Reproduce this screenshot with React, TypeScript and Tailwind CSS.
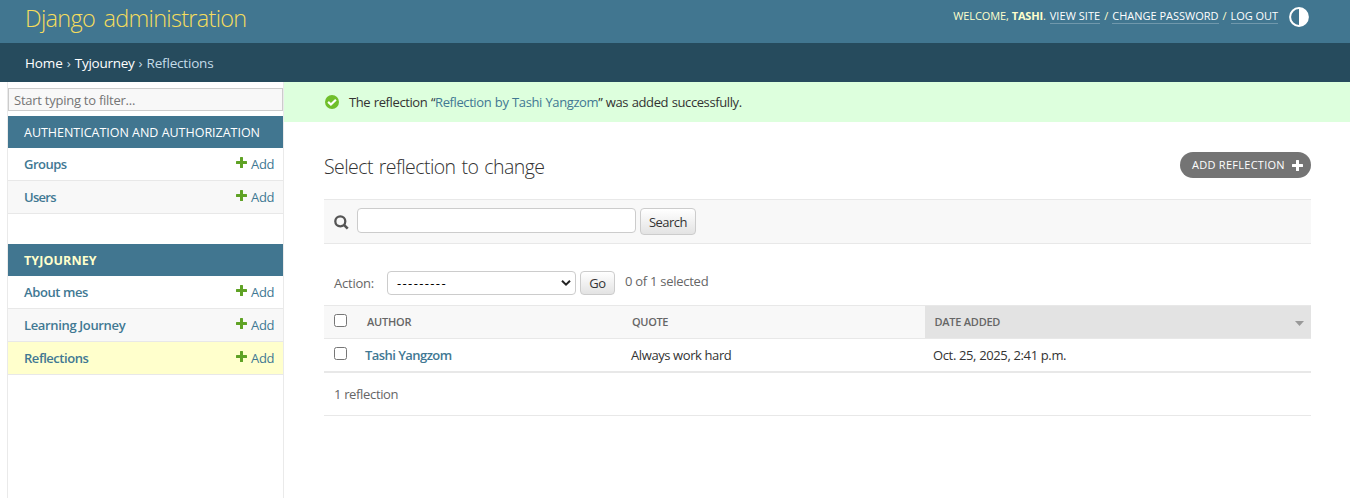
import React from "react";

type Model = { name: string; nameClass: string; rowClass: string };

const auth: Model[] = [
  { name: "Groups", nameClass: "tracking-[-0.5px]", rowClass: "bg-white" },
  { name: "Users", nameClass: "tracking-[-0.7px]", rowClass: "bg-[#f8f8f8]" },
];

const journey: Model[] = [
  { name: "About mes", nameClass: "tracking-[-0.4px]", rowClass: "bg-white" },
  { name: "Learning Journey", nameClass: "tracking-[-0.35px]", rowClass: "bg-[#f8f8f8]" },
  { name: "Reflections", nameClass: "tracking-[-0.45px]", rowClass: "bg-[#ffffcc]" },
];

function Plus({ className }: { className: string }) {
  return (
    <svg viewBox="0 0 11 11" className={className} fill="currentColor">
      <path d="M4 .6Q4 0 4.6 0H6.4Q7 0 7 .6V4H10.4Q11 4 11 4.6V6.4Q11 7 10.4 7H7V10.4Q7 11 6.4 11H4.6Q4 11 4 10.4V7H.6Q0 7 0 6.4V4.6Q0 4 .6 4H4Z" />
    </svg>
  );
}

function ModelRows({ items }: { items: Model[] }) {
  return (
    <ul>
      {items.map((m) => (
        <li
          key={m.name}
          className={`flex h-[33px] items-center border-b border-[#e8e8e8] pl-4 pr-2 text-[13px] leading-8 text-[#417893] ${m.rowClass}`}
        >
          <a className={`flex-1 font-semibold ${m.nameClass}`}>{m.name}</a>
          <a className="flex">
            <Plus className="mr-1 mt-[9px] size-[11px] text-[#5fa225]" />
            <span className="w-6 tracking-[-0.3px]">Add</span>
          </a>
        </li>
      ))}
    </ul>
  );
}

const toolLink = "mx-1 inline-block h-[17px] border-b border-white/25 leading-[18px] text-white";
const button =
  "rounded-[4px] border border-[#ccc] bg-linear-to-b from-white to-[#e3e3e3] text-center text-[#333]";
const checkbox =
  "block size-[13px] appearance-none rounded-[2.5px] border border-[#767676] bg-white";

export default function App() {
  return (
    <div className="flex h-[498px] flex-col overflow-hidden bg-white font-['Open_Sans','Noto_Sans',sans-serif] text-[13px] text-[#333]">
      <header className="flex h-[43px] shrink-0 items-start justify-between bg-[#417690] pl-[25px] pr-[41px]">
        <h1 className="text-[23.5px] font-light leading-9 tracking-[-0.7px] text-[#f5dd5d] [word-spacing:3px]">
          Django administration
        </h1>
        <div className="flex pt-[7px]">
          <div className="flex text-[11px] leading-[18px] text-[#ffffcc]">
            <span className="tracking-[-0.1px]">WELCOME,</span>
            <strong className="ml-[3px] font-bold tracking-[-0.2px]">TASHI</strong>
            <span>.</span>
            <a className={`${toolLink} tracking-[0.05px]`}>VIEW SITE</a>/
            <a className={`${toolLink} tracking-[-0.01px]`}>CHANGE PASSWORD</a>/
            <a className={`${toolLink} mr-0 tracking-[-0.05px]`}>LOG OUT</a>
          </div>
          <svg viewBox="0 0 20 20" className="ml-[11px] size-5">
            <circle cx="10" cy="10" r="8.9" fill="none" stroke="#fff" strokeWidth="2" />
            <path d="M10 1a9 9 0 0 1 0 18z" fill="#fff" />
          </svg>
        </div>
      </header>

      <nav className="flex h-[39px] shrink-0 items-center gap-1 bg-[#264b5d] pl-[25px] pt-px text-[13.5px] leading-[38px] text-[#c4dce8]">
        <a className="font-medium text-white tracking-[-0.1px]">Home</a>
        <span className="w-[4px]">›</span>
        <a className="font-medium tracking-[-0.27px] text-white">Tyjourney</a>
        <span className="w-[4px]">›</span>
        <span className="tracking-[-0.18px]">Reflections</span>
      </nav>

      <div className="flex min-h-0 flex-1">
        <aside className="ml-[7px] w-[277px] shrink-0 border-x border-[#eaeaea] pt-[6px]">
          <input
            placeholder="Start typing to filter..."
            className="block h-[23px] w-full border border-[#ccc] bg-[#f8f8f8] px-[5px] text-[13px] leading-5 tracking-[-0.25px] outline-none placeholder:text-[#757575]"
          />
          <h2 className="mt-[5px] h-8 bg-[#417690] pl-4 pt-px text-[12.5px] leading-8 tracking-[-0.02px] text-white">
            AUTHENTICATION AND AUTHORIZATION
          </h2>
          <ModelRows items={auth} />
          <h2 className="mt-[30px] h-8 bg-[#417690] pl-4 pt-px text-[12.5px] font-bold leading-8 tracking-[0.1px] text-[#ffffcc]">
            TYJOURNEY
          </h2>
          <ModelRows items={journey} />
        </aside>

        <main className="flex-1">
          <div className="flex h-10 items-center bg-[#ddffdd] pl-[41px]">
            <svg viewBox="0 0 14 14" className="mr-[10px] size-[14px]">
              <circle cx="7" cy="7" r="7" fill="#70bf2b" />
              <path d="M3.1 6.9l2.8 2.6 5-4.8" fill="none" stroke="#fff" strokeWidth="2.2" />
            </svg>
            <p className="leading-10 tracking-[-0.4px] [word-spacing:0.6px]">
              The reflection “
              <a className="text-[#417893]">Reflection by Tashi Yangzom</a>” was added
              successfully.
            </p>
          </div>

          <div className="ml-10 mr-[39px]">
            <div className="flex h-[77px] items-start justify-between pt-[30px]">
              <h1 className="text-[19.5px] font-light leading-[30px] tracking-[-0.57px] text-[#333] [word-spacing:1.5px]">
                Select reflection to change
              </h1>
              <a className="flex h-[26px] w-[131px] items-center rounded-full bg-[#747474] pl-3 text-[11px] leading-[26px] tracking-[0.27px] text-white">
                ADD REFLECTION
                <Plus className="ml-[7px] size-[11px]" />
              </a>
            </div>

            <form className="flex h-[45px] items-start border-y border-[#e8e8e8] bg-[#f8f8f8] pl-[10px] pt-2">
              <svg viewBox="0 0 15 15" className="mt-[7px] size-[15px]" fill="none" stroke="#555">
                <circle cx="6.3" cy="6.3" r="5" strokeWidth="2.3" />
                <path d="M9.7 9.7l4 4" strokeWidth="2.6" />
              </svg>
              <input className="ml-2 h-[25px] w-[279px] rounded-[4px] border border-[#ccc] bg-white outline-none" />
              <button
                type="button"
                className={`${button} ml-1 h-[27px] w-14 leading-[26px] tracking-[-0.5px]`}
              >
                Search
              </button>
            </form>

            <div className="flex h-[61px] items-start pl-[10px] pt-[27px] text-[#666]">
              <label className="w-[53px] leading-6 tracking-[-0.22px]">Action:</label>
              <div className="flex h-6 w-[189px] items-center justify-between rounded-[4px] border border-[#ccc] bg-white pl-[9px] pr-1 text-black">
                <span className="leading-[22px] tracking-[1.37px]">---------</span>
                <svg viewBox="0 0 10 8" className="h-2 w-[10px]">
                  <path d="M1 1.7l4 4 4-4" fill="none" stroke="#222" strokeWidth="2" />
                </svg>
              </div>
              <button
                type="button"
                className={`${button} ml-1 h-6 w-[35px] leading-[23px] tracking-[-0.5px]`}
              >
                Go
              </button>
              <span className="ml-[10px] leading-[21px] tracking-[-0.27px]">0 of 1 selected</span>
            </div>

            <table className="w-full table-fixed border-separate border-spacing-0">
              <thead>
                <tr className="h-[34px] bg-[#f8f8f8] text-left text-[11px] leading-4 text-[#666]">
                  <th className="w-[33px] border-y border-[#e8e8e8] pb-[3px] pl-[10px] align-middle">
                    <input type="checkbox" className={checkbox} />
                  </th>
                  <th className="w-[264px] border-y border-[#e8e8e8] pl-[10px] font-semibold tracking-[-0.2px]">
                    AUTHOR
                  </th>
                  <th className="w-[304px] border-y border-[#e8e8e8] pl-[11px] font-semibold tracking-[-0.35px]">
                    QUOTE
                  </th>
                  <th className="border-y border-[#e8e8e8] bg-[#e3e3e3] pl-[9.5px] pr-[7.5px] font-semibold tracking-[-0.25px]">
                    <div className="flex items-center justify-between">
                      DATE ADDED
                      <svg viewBox="0 0 9 5" className="mt-[2px] h-[5px] w-[9px]">
                        <path d="M0 0h9L4.5 5z" fill="#999" />
                      </svg>
                    </div>
                  </th>
                </tr>
              </thead>
              <tbody>
                <tr className="h-[34px] leading-4">
                  <td className="border-b-2 border-[#e8e8e8] pb-[3px] pl-[10px] align-middle">
                    <input type="checkbox" className={checkbox} />
                  </td>
                  <td className="border-b-2 border-[#e8e8e8] pl-2 font-semibold tracking-[-0.55px] text-[#417893]">
                    Tashi Yangzom
                  </td>
                  <td className="border-b-2 border-[#e8e8e8] pl-[10px] tracking-[-0.4px]">
                    Always work hard
                  </td>
                  <td className="border-b-2 border-[#e8e8e8] pl-2 tracking-[-0.36px]">
                    Oct. 25, 2025, 2:41 p.m.
                  </td>
                </tr>
              </tbody>
            </table>
            <p className="h-[43px] border-b border-[#e8e8e8] pl-[10px] leading-[42px] tracking-[-0.34px] text-[#666]">
              1 reflection
            </p>
          </div>
        </main>
      </div>
    </div>
  );
}
